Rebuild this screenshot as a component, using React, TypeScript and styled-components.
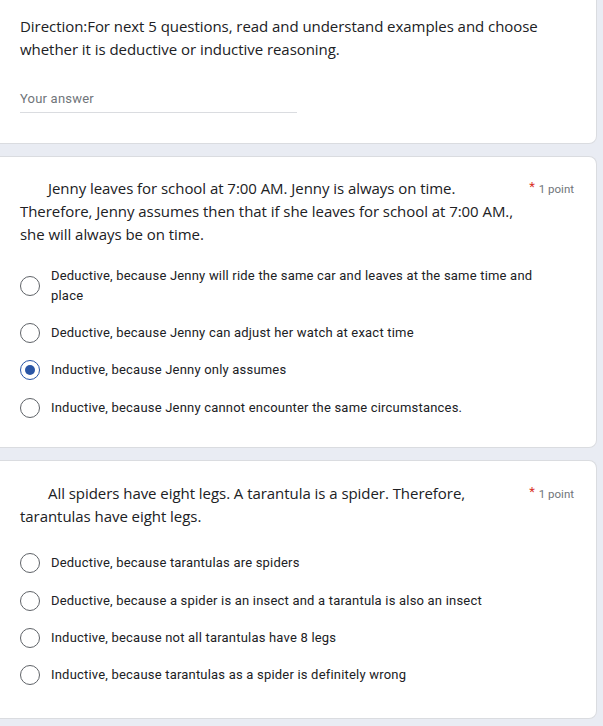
import React from "react";
import styled, { createGlobalStyle } from "styled-components";

const GlobalStyle = createGlobalStyle`
  html, body {
    margin: 0;
    padding: 0;
    background: #e9ecf3;
  }
  * {
    box-sizing: border-box;
  }
`;

const Page = styled.div`
  width: 597px;
  display: flex;
  flex-direction: column;
  gap: 12px;
  margin-top: -10px;
  padding-bottom: 10px;
`;

const Card = styled.div<{ $top: number; $bottom: number }>`
  background: #fff;
  border: 1px solid #dadce0;
  border-left: none;
  border-radius: 0 8px 8px 0;
  padding: ${(p) => p.$top}px 22px ${(p) => p.$bottom}px 20px;
`;

const QuestionHead = styled.div`
  display: flex;
  align-items: flex-start;
  justify-content: space-between;
`;

const QuestionText = styled.div<{ $indent?: boolean }>`
  font-family: "Open Sans", "Liberation Sans", sans-serif;
  font-size: 15px;
  line-height: 23px;
  letter-spacing: -0.05px;
  color: #202124;
  text-indent: ${(p) => (p.$indent ? "28px" : "0")};
  width: ${(p) => (p.$indent ? "500px" : "auto")};
`;

const Points = styled.div`
  flex: none;
  font-family: Roboto, "Liberation Sans", sans-serif;
  font-size: 11.5px;
  color: #70757a;
  line-height: 23px;
  white-space: nowrap;
`;

const Star = styled.span`
  color: #d93025;
  font-size: 13px;
  margin-right: 4px;
  position: relative;
  top: -2px;
`;

const AnswerField = styled.div`
  margin-top: 28px;
  width: 277px;
  border-bottom: 1px solid #dadce0;
  font-family: Roboto, "Liberation Sans", sans-serif;
  font-size: 13px;
  line-height: 20px;
  letter-spacing: 0.2px;
  padding-bottom: 3px;
  color: #70757a;
`;

const Options = styled.div<{ $gap: number }>`
  margin-top: ${(p) => p.$gap}px;
  display: flex;
  flex-direction: column;
`;

const OptionRow = styled.label`
  display: flex;
  align-items: center;
  gap: 11px;
  padding: 8.7px 0;
  font-family: Roboto, "Liberation Sans", sans-serif;
  font-size: 13px;
  line-height: 20px;
  letter-spacing: 0.2px;
  color: #202124;
  max-width: 540px;
`;

const Radio = styled.span<{ $checked?: boolean }>`
  flex: none;
  width: 20px;
  height: 20px;
  border-radius: 50%;
  border: 1.6px solid ${(p) => (p.$checked ? "#2a56a6" : "#5f6368")};
  display: flex;
  align-items: center;
  justify-content: center;
  &::after {
    content: "";
    width: 10px;
    height: 10px;
    border-radius: 50%;
    background: #2a56a6;
    display: ${(p) => (p.$checked ? "block" : "none")};
  }
`;

type Question = {
  text: string;
  options: string[];
  checked?: number;
  gap: number;
  top: number;
  bottom: number;
};

const questions: Question[] = [
  {
    text:
      "Jenny leaves for school at 7:00 AM. Jenny is always on time. Therefore, Jenny assumes then that if she leaves for school at 7:00 AM., she will always be on time.",
    options: [
      "Deductive, because Jenny will ride the same car and leaves at the same time and place",
      "Deductive, because Jenny can adjust her watch at exact time",
      "Inductive, because Jenny only assumes",
      "Inductive, because Jenny cannot encounter the same circumstances.",
    ],
    checked: 2,
    gap: 11,
    top: 20,
    bottom: 20,
  },
  {
    text:
      "All spiders have eight legs. A tarantula is a spider. Therefore, tarantulas have eight legs.",
    options: [
      "Deductive, because tarantulas are spiders",
      "Deductive, because a spider is an insect and a tarantula is also an insect",
      "Inductive, because not all tarantulas have 8 legs",
      "Inductive, because tarantulas as a spider is definitely wrong",
    ],
    gap: 17,
    top: 21,
    bottom: 24,
  },
];

export default function App() {
  return (
    <>
      <GlobalStyle />
      <Page>
        <Card $top={24} $bottom={30}>
          <QuestionText>
            Direction:For next 5 questions, read and understand examples and
            choose whether it is deductive or inductive reasoning.
          </QuestionText>
          <AnswerField>Your answer</AnswerField>
        </Card>
        {questions.map((q, qi) => (
          <Card key={qi} $top={q.top} $bottom={q.bottom}>
            <QuestionHead>
              <QuestionText $indent>{q.text}</QuestionText>
              <Points>
                <Star>*</Star>1 point
              </Points>
            </QuestionHead>
            <Options $gap={q.gap}>
              {q.options.map((o, oi) => (
                <OptionRow key={oi}>
                  <Radio $checked={q.checked === oi} />
                  <span>{o}</span>
                </OptionRow>
              ))}
            </Options>
          </Card>
        ))}
      </Page>
    </>
  );
}
